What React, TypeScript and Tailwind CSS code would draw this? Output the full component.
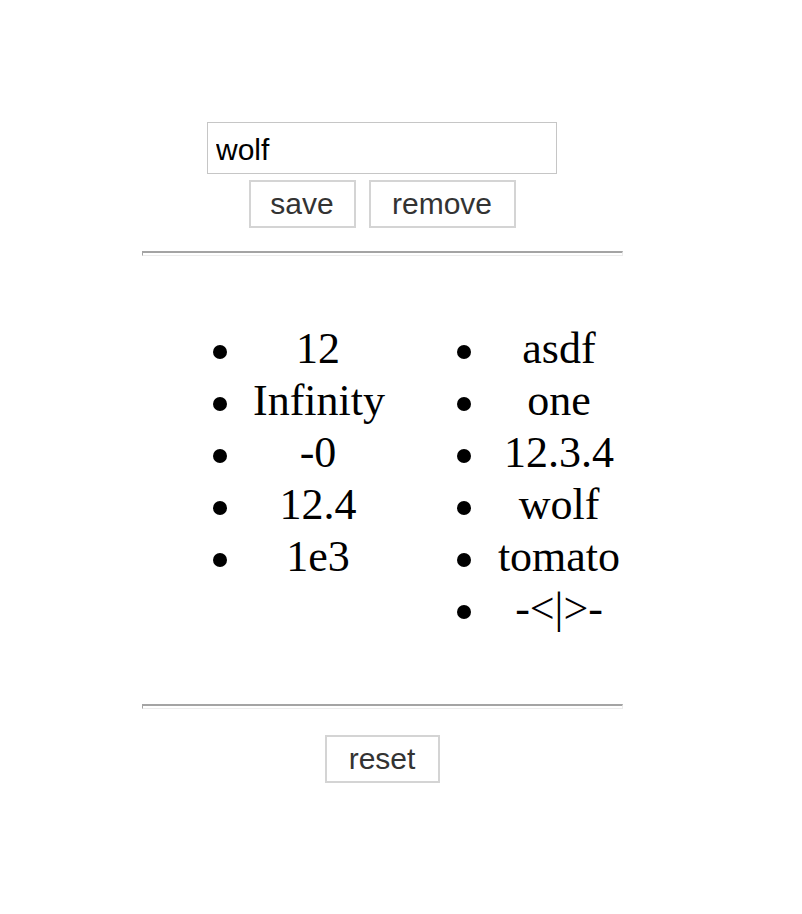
import React, { useState } from 'react';

const left = ['12', 'Infinity', '-0', '12.4', '1e3'];
const right = ['asdf', 'one', '12.3.4', 'wolf', 'tomato', '-<|>-'];

const btn =
  "h-[48px] border-2 border-[#d4d4d4] bg-white text-[#333] text-[30px] leading-none font-['Liberation_Sans',Arial,sans-serif]";

const Rule = () => (
  <div className="h-[5px] w-[481px] border-t-2 border-l border-t-[#a4a4a4] border-l-[#a4a4a4] border-b border-r border-b-[#ececec] border-r-[#ececec]" />
);

const List = ({ items, textW, className }: { items: string[]; textW: string; className: string }) => (
  <ul className={`flex flex-col text-[44px] leading-[52px] font-['Liberation_Serif','Times_New_Roman',serif] text-black ${className}`}>
    {items.map((v) => (
      <li key={v} className="flex items-center">
        <span className="shrink-0 w-[14px] h-[14px] mt-[5px] mr-[26px] rounded-full bg-black" />
        <span className={`${textW} text-center whitespace-nowrap`}>{v}</span>
      </li>
    ))}
  </ul>
);

export default function App() {
  const [word, setWord] = useState('wolf');

  return (
    <div className="w-[764px] bg-white min-h-[914px]">
      <div className="mx-auto w-[480px] pt-[122px] flex flex-col">
        <div className="flex flex-col items-center">
          <input
            value={word}
            onChange={(e) => setWord(e.target.value)}
            className="w-[350px] h-[52px] border border-[#c6c6c6] px-[8px] pt-[3px] text-[30px] text-black font-['Liberation_Sans',Arial,sans-serif] outline-none"
          />
          <div className="flex gap-[13px] mt-[6px]">
            <button className={`${btn} w-[107px]`}>save</button>
            <button className={`${btn} w-[147px]`}>remove</button>
          </div>
        </div>

        <div className="mt-[23px]">
          <Rule />
        </div>

        <div className="flex items-start mt-[67px] pl-[71px]">
          <List items={left} textW="w-[130px]" className="" />
          <List items={right} textW="w-[124px]" className="ml-[74px]" />
        </div>

        <div className="mt-[69px]">
          <Rule />
        </div>

        <div className="flex justify-center mt-[26px]">
          <button className={`${btn} w-[115px]`}>reset</button>
        </div>
      </div>
    </div>
  );
}
